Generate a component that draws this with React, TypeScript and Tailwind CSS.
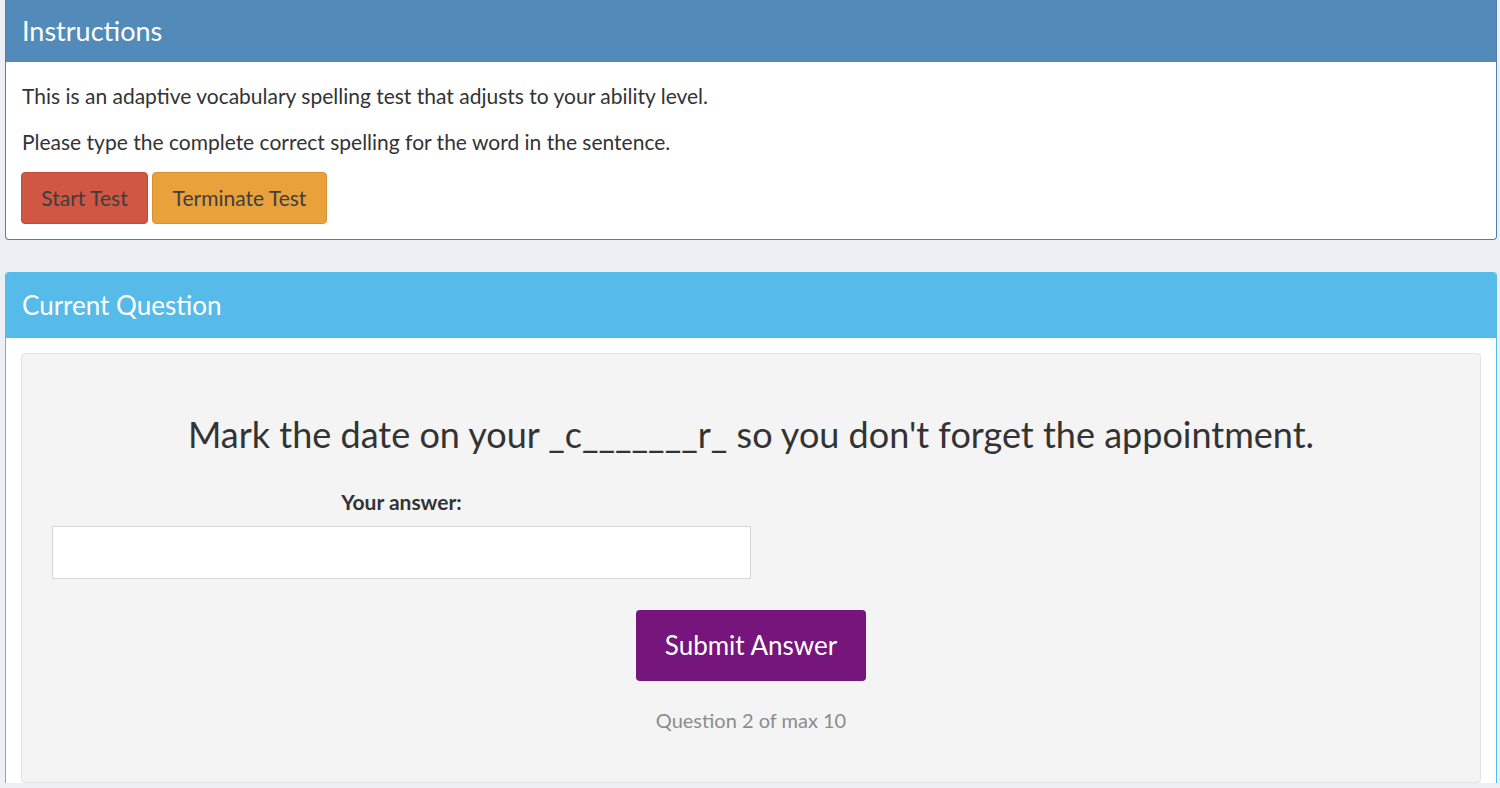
import React from 'react';

// =============================================================================
// Panel
// =============================================================================

interface PanelProps {
  title: string;
  headerClass: string;
  borderClass: string;
  className?: string;
  children: React.ReactNode;
}

function Panel({ title, headerClass, borderClass, className = '', children }: PanelProps) {
  return (
    <div className={`ml-[5px] mr-[3px] bg-white border rounded-[4px] overflow-hidden ${borderClass} ${className}`}>
      <div className={`px-4 text-white ${headerClass}`}>{title}</div>
      {children}
    </div>
  );
}

// =============================================================================
// App
// =============================================================================

export default function App() {
  return (
    <div className="min-h-[788px] bg-[#eceff3] font-['Lato','Open_Sans',sans-serif] text-[#333]">
      {/* Instructions */}
      <Panel
        title="Instructions"
        headerClass="bg-[#528bba] text-[27px] leading-[27px] pt-[17px] pb-[18px]"
        borderClass="border-[#4f80ad] rounded-t-none border-t-0"
      >
        <div className="px-[15px] pt-[20px] pb-[15px] text-[21px]">
          <p className="leading-[28px] mb-[18px] pl-px">
            This is an adaptive vocabulary spelling test that adjusts to your ability level.
          </p>
          <p className="leading-[28px] mb-[16px] pl-px">
            Please type the complete correct spelling for the word in the sentence.
          </p>
          <div className="flex gap-[4px]">
            <button className="h-[52px] w-[127px] rounded-[4px] bg-[#d05744] border border-[#be4a38] text-[#3e3e3e] text-[21px]">
              Start Test
            </button>
            <button className="h-[52px] w-[175px] rounded-[4px] bg-[#e9a23b] border border-[#d89030] text-[#3e3e3e] text-[21px]">
              Terminate Test
            </button>
          </div>
        </div>
      </Panel>

      {/* Current Question */}
      <Panel
        title="Current Question"
        headerClass="bg-[#57bbea] text-[26px] leading-[27px] pt-[19px] pb-[19px]"
        borderClass="border-[#57bbea] rounded-b-none border-b-0"
        className="mt-[32px]"
      >
        <div className="px-[15px] pt-[15px]">
          <div className="bg-[#f4f4f4] border border-[#e3e3e3] rounded-[4px] pt-[58px] pb-[48px]">
            <h3 className="text-center text-[36px] leading-[44px] text-[#333]">
              Mark the date on your _c_______r_ so you don't forget the appointment.
            </h3>

            <div className="w-[699px] ml-[30px] mt-[32px]">
              <label className="block text-center font-bold text-[21px] leading-[28px]">Your answer:</label>
              <input
                type="text"
                className="mt-[10px] block w-full h-[53px] bg-white border border-[#d6d6d6] outline-none"
              />
            </div>

            <div className="flex justify-center mt-[31px]">
              <button className="h-[71px] w-[230px] rounded-[4px] bg-[#76157b] text-white text-[26px]">
                Submit Answer
              </button>
            </div>

            <p className="text-center text-[#8c8c8c] text-[20px] leading-[28px] mt-[25px]">
              Question 2 of max 10
            </p>
          </div>
        </div>
      </Panel>
    </div>
  );
}
